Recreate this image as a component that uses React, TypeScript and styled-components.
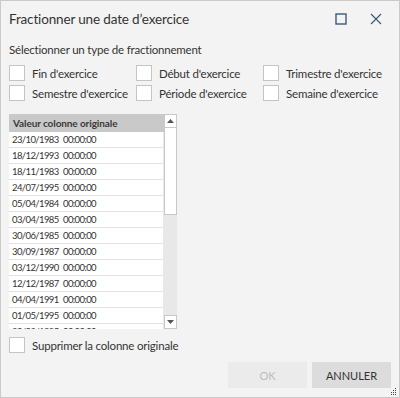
import React from "react";
import styled, { createGlobalStyle } from "styled-components";

const Global = createGlobalStyle`
  html, body { margin: 0; padding: 0; background: #f3f3f3; }
  * { box-sizing: border-box; }
`;

const FONT = `"Lato", "Noto Sans", sans-serif`;

const Window = styled.div`
  width: 400px;
  height: 398px;
  border: 1px solid #cacaca;
  background: #f3f3f3;
  font-family: ${FONT};
  color: #333;
  display: flex;
  flex-direction: column;
  position: relative;
`;

const TitleBar = styled.div`
  height: 35px;
  display: flex;
  align-items: center;
  padding: 0 10px 0 8px;
`;

const Title = styled.div`
  flex: 1;
  font-size: 13.5px;
  letter-spacing: -0.15px;
  color: #333;
`;

const TitleButton = styled.button`
  width: 26px;
  height: 26px;
  border: none;
  background: transparent;
  padding: 0;
  margin-left: 9px;
  display: flex;
  align-items: center;
  justify-content: center;
`;

const Body = styled.div`
  padding: 4px 8px 0 8px;
  display: flex;
  flex-direction: column;
  flex: 1;
`;

const SectionLabel = styled.div`
  font-size: 11.5px;
  letter-spacing: -0.2px;
  height: 20px;
  line-height: 20px;
  margin-bottom: 5px;
`;

const OptionsGrid = styled.div`
  display: grid;
  grid-template-columns: 127px 127px auto;
  row-gap: 4px;
`;

const Option = styled.label`
  display: flex;
  align-items: center;
  height: 16px;
  font-size: 11.5px;
  letter-spacing: -0.2px;
  white-space: nowrap;
  gap: 7px;
`;

const Box = styled.span`
  width: 16px;
  height: 16px;
  background: #fff;
  border: 1px solid #c4c4c4;
  flex: none;
`;

const TableWrap = styled.div`
  margin-top: 13px;
  width: 168px;
  height: 215px;
  display: flex;
  background: #e8e8e8;
`;

const ListCol = styled.div`
  width: 155px;
  overflow: hidden;
  display: flex;
  flex-direction: column;
`;

const Header = styled.div`
  height: 18px;
  flex: none;
  background: #c9c9c9;
  font-size: 10px;
  font-weight: 700;
  letter-spacing: -0.1px;
  line-height: 18px;
  padding-left: 4px;
  color: #3a3a3a;
  white-space: nowrap;
`;

const Row = styled.div`
  height: 16px;
  flex: none;
  background: #fff;
  border-bottom: 1px solid #e2e2e2;
  font-size: 9.5px;
  letter-spacing: -0.6px;
  word-spacing: 2.5px;
  line-height: 15px;
  padding-left: 3px;
  color: #333;
  white-space: nowrap;
  margin-right: 1px;
`;

const ScrollBar = styled.div`
  width: 13px;
  display: flex;
  flex-direction: column;
  background: #e8e8e8;
`;

const ArrowBtn = styled.div`
  height: 14px;
  flex: none;
  background: #fff;
  border: 1px solid #c8c8c8;
  display: flex;
  align-items: center;
  justify-content: center;
`;

const Thumb = styled.div`
  height: 87px;
  flex: none;
  background: #fff;
  border: 1px solid #c8c8c8;
  border-top: none;
`;

const Track = styled.div`
  flex: 1;
`;

const DeleteOption = styled(Option)`
  margin-top: 8px;
`;

const Footer = styled.div`
  display: flex;
  justify-content: flex-end;
  gap: 5px;
  padding: 0 8px 9px 0;
  margin-top: auto;
`;

const Button = styled.button<{ $disabled?: boolean }>`
  width: 79px;
  height: 26px;
  border: none;
  font-family: ${FONT};
  font-size: 11px;
  background: ${(p) => (p.$disabled ? "#ebebeb" : "#dcdcdc")};
  color: ${(p) => (p.$disabled ? "#bdbdbd" : "#333")};
  padding: 0;
`;

const Grip = styled.svg`
  position: absolute;
  right: 2px;
  bottom: 2px;
`;

const rows = [
  "23/10/1983 00:00:00",
  "18/12/1993 00:00:00",
  "18/11/1983 00:00:00",
  "24/07/1995 00:00:00",
  "05/04/1984 00:00:00",
  "03/04/1985 00:00:00",
  "30/06/1985 00:00:00",
  "30/09/1987 00:00:00",
  "03/12/1990 00:00:00",
  "12/12/1987 00:00:00",
  "04/04/1991 00:00:00",
  "01/05/1995 00:00:00",
  "20/03/1995 00:00:00",
];

const options = [
  "Fin d'exercice",
  "Début d'exercice",
  "Trimestre d'exercice",
  "Semestre d'exercice",
  "Période d'exercice",
  "Semaine d'exercice",
];

export default function App() {
  return (
    <>
      <Global />
      <Window>
        <TitleBar>
          <Title>Fractionner une date d’exercice</Title>
          <TitleButton aria-label="Agrandir">
            <svg width="12" height="12" viewBox="0 0 12 12">
              <rect x="1" y="1" width="10" height="10" fill="none" stroke="#3a5a7a" strokeWidth="1.4" />
            </svg>
          </TitleButton>
          <TitleButton aria-label="Fermer">
            <svg width="12" height="12" viewBox="0 0 12 12">
              <path d="M1 1 L11 11 M11 1 L1 11" stroke="#3a5a7a" strokeWidth="1.2" />
            </svg>
          </TitleButton>
        </TitleBar>
        <Body>
          <SectionLabel>Sélectionner un type de fractionnement</SectionLabel>
          <OptionsGrid>
            {options.map((o) => (
              <Option key={o}>
                <Box />
                {o}
              </Option>
            ))}
          </OptionsGrid>
          <TableWrap>
            <ListCol>
              <Header>Valeur colonne originale</Header>
              {rows.map((r) => (
                <Row key={r}>{r}</Row>
              ))}
            </ListCol>
            <ScrollBar>
              <ArrowBtn>
                <svg width="7" height="4" viewBox="0 0 7 4">
                  <path d="M3.5 0 L7 4 L0 4 Z" fill="#555" />
                </svg>
              </ArrowBtn>
              <Thumb />
              <Track />
              <ArrowBtn>
                <svg width="7" height="4" viewBox="0 0 7 4">
                  <path d="M0 0 L7 0 L3.5 4 Z" fill="#555" />
                </svg>
              </ArrowBtn>
            </ScrollBar>
          </TableWrap>
          <DeleteOption>
            <Box />
            Supprimer la colonne originale
          </DeleteOption>
        </Body>
        <Footer>
          <Button $disabled>OK</Button>
          <Button>ANNULER</Button>
        </Footer>
        <Grip width="7" height="7" viewBox="0 0 7 7">
          {[
            [5, 0], [5, 2], [3, 2], [5, 4], [3, 4], [1, 4], [5, 6], [3, 6], [1, 6],
          ].map(([x, y], i) => (
            <rect key={i} x={x} y={y} width="1" height="1" fill="#445" />
          ))}
        </Grip>
      </Window>
    </>
  );
}
